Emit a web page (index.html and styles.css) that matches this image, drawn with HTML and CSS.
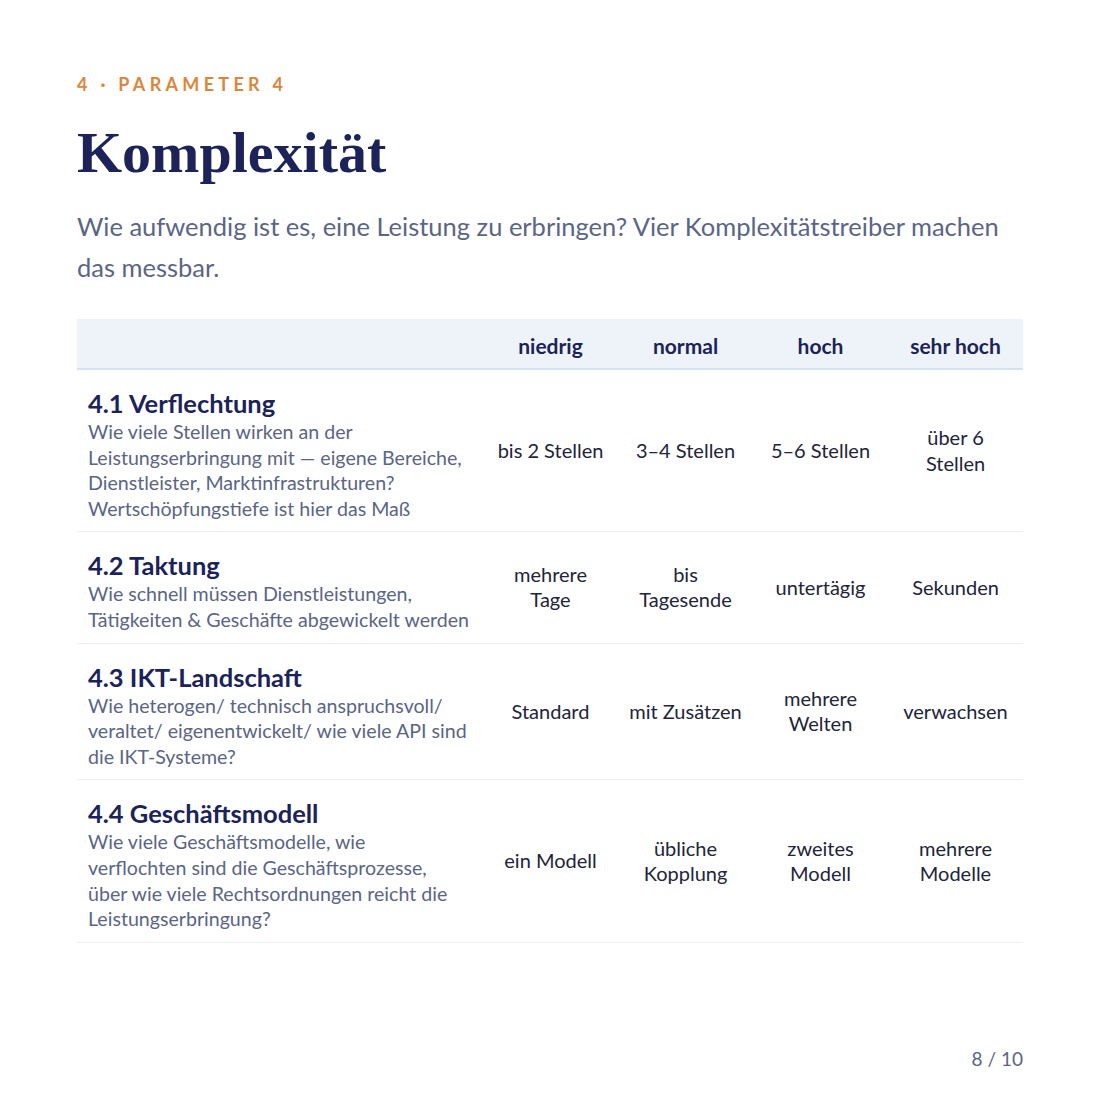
FILE: index.html
```html
<!DOCTYPE html>
<html lang="de">
<head>
<meta charset="utf-8">
<title>Komplexität</title>
<link rel="stylesheet" href="styles.css">
</head>
<body>
<main class="slide">
  <div class="eyebrow">4 · Parameter 4</div>
  <h1 class="title">Komplexität</h1>
  <p class="lead">Wie aufwendig ist es, eine Leistung zu erbringen? Vier Komplexitätstreiber machen das messbar.</p>

  <table class="matrix">
    <colgroup>
      <col class="c-label">
      <col class="c-val"><col class="c-val"><col class="c-val"><col class="c-val">
    </colgroup>
    <thead>
      <tr>
        <th></th>
        <th>niedrig</th>
        <th>normal</th>
        <th>hoch</th>
        <th>sehr hoch</th>
      </tr>
    </thead>
    <tbody>
      <tr>
        <td class="label">
          <div class="row-title">4.1 Verflechtung</div>
          <div class="row-desc">Wie viele Stellen wirken an der Leistungserbringung mit — eigene Bereiche, Dienstleister, Marktinfrastrukturen? Wertschöpfungstiefe ist hier das Maß</div>
        </td>
        <td>bis 2 Stellen</td>
        <td>3–4 Stellen</td>
        <td>5–6 Stellen</td>
        <td>über 6 Stellen</td>
      </tr>
      <tr>
        <td class="label">
          <div class="row-title">4.2 Taktung</div>
          <div class="row-desc">Wie schnell müssen Dienstleistungen, Tätigkeiten &amp; Geschäfte abgewickelt werden</div>
        </td>
        <td>mehrere Tage</td>
        <td>bis Tagesende</td>
        <td>untertägig</td>
        <td>Sekunden</td>
      </tr>
      <tr>
        <td class="label">
          <div class="row-title">4.3 IKT-Landschaft</div>
          <div class="row-desc">Wie heterogen/ technisch anspruchsvoll/ veraltet/ eigenentwickelt/ wie viele API sind die IKT-Systeme?</div>
        </td>
        <td>Standard</td>
        <td>mit Zusätzen</td>
        <td>mehrere Welten</td>
        <td>verwachsen</td>
      </tr>
      <tr>
        <td class="label">
          <div class="row-title">4.4 Geschäftsmodell</div>
          <div class="row-desc">Wie viele Geschäftsmodelle, wie<br>verflochten sind die Geschäftsprozesse, über wie viele Rechtsordnungen reicht die Leistungserbringung?</div>
        </td>
        <td>ein Modell</td>
        <td>übliche Kopplung</td>
        <td>zweites Modell</td>
        <td>mehrere Modelle</td>
      </tr>
    </tbody>
  </table>

  <div class="footer">8 / 10</div>
</main>
</body>
</html>
```

FILE: styles.css
```css
html, body {
  margin: 0;
  padding: 0;
  background: #ffffff;
}

body {
  font-family: "Lato", "Noto Sans", sans-serif;
  color: #22243a;
}

.slide {
  width: 1100px;
  height: 1100px;
  box-sizing: border-box;
  padding: 74px 77px 0 77px;
  display: flex;
  flex-direction: column;
}

.eyebrow {
  font-size: 18px;
  line-height: 20px;
  font-weight: 700;
  letter-spacing: 4.3px;
  text-transform: uppercase;
  color: #d9873d;
}

.title {
  margin: 24px 0 0 0;
  font-family: "Liberation Serif", "DejaVu Serif", serif;
  font-weight: 700;
  font-size: 58px;
  line-height: 70px;
  color: #1b2358;
}

.lead {
  margin: 18px 0 0 0;
  font-size: 25.5px;
  line-height: 41px;
  color: #5b6585;
}

.matrix {
  margin-top: 31px;
  width: 946px;
  border-collapse: collapse;
  table-layout: fixed;
}

.c-label { width: 406px; }
.c-val { width: 135px; }

.matrix thead th {
  background: #eef3fa;
  border-bottom: 2px solid #d6e2f2;
  padding: 14px 4px 10px;
  font-size: 21px;
  line-height: 25px;
  font-weight: 700;
  color: #1b2358;
  text-align: center;
}

.matrix tbody td {
  border-bottom: 1px solid #eef0f4;
  padding: 0 10px;
  font-size: 20px;
  line-height: 25.5px;
  color: #22243a;
  text-align: center;
  vertical-align: middle;
}

.matrix tbody td.label {
  text-align: left;
  padding: 17px 13px 10px 11px;
}

.row-title {
  font-size: 25.5px;
  line-height: 32px;
  font-weight: 700;
  color: #1b2358;
}

.row-desc {
  font-size: 19.6px;
  line-height: 25.6px;
  color: #5b6585;
}

.footer {
  margin-top: auto;
  margin-bottom: 28px;
  text-align: right;
  font-size: 19px;
  line-height: 26px;
  color: #5b6585;
}
```
